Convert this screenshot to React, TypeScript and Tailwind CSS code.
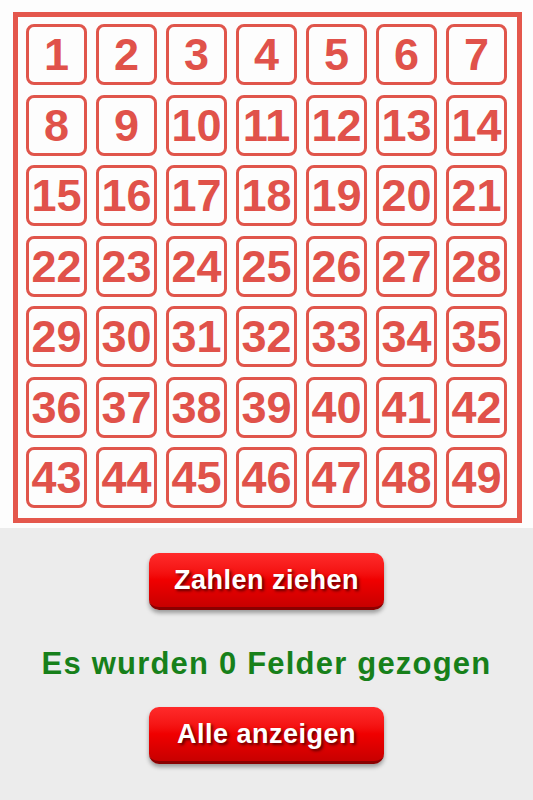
import React from 'react';

const numbers = Array.from({ length: 49 }, (_, i) => i + 1);

const RedButton = ({ label }: { label: string }) => (
    <button
        className="w-[235px] h-[57px] rounded-[10px] text-white font-bold text-[27px] tracking-[0.5px] bg-gradient-to-b from-[#ff2a2a] via-[#f00000] to-[#c80000] border-b-[3px] border-[#8a0000] shadow-[0_3px_4px_rgba(0,0,0,0.35)] [text-shadow:2px_2px_3px_rgba(60,0,0,0.8)]"
    >
        {label}
    </button>
);

const App = () => {
    return (
        <div className="w-[533px] h-[800px] bg-[#ececec] font-['Liberation_Sans',Arial,sans-serif]">
            <div className="bg-[#fdfdfd] h-[528px] pt-[12px] pl-[13px]">
                <div className="w-[509px] h-[511px] border-[5px] border-[#e4574c] pl-[8px] pt-[7px]">
                    <div className="grid grid-cols-[repeat(7,61px)] gap-x-[9px] gap-y-[9.5px]">
                        {numbers.map((n) => (
                            <div
                                key={n}
                                className="h-[61px] border-[3px] border-[#e0554b] rounded-[8px] flex items-center justify-center text-[45px] font-bold text-[#e0524a] leading-none"
                            >
                                {n}
                            </div>
                        ))}
                    </div>
                </div>
            </div>

            <div className="flex flex-col items-center">
                <div className="mt-[25px]">
                    <RedButton label="Zahlen ziehen" />
                </div>
                <p className="mt-[38px] text-[31px] font-bold text-[#17801a] tracking-[1.2px] leading-none">
                    Es wurden 0 Felder gezogen
                </p>
                <div className="mt-[28px]">
                    <RedButton label="Alle anzeigen" />
                </div>
            </div>
        </div>
    );
};

export default App;
